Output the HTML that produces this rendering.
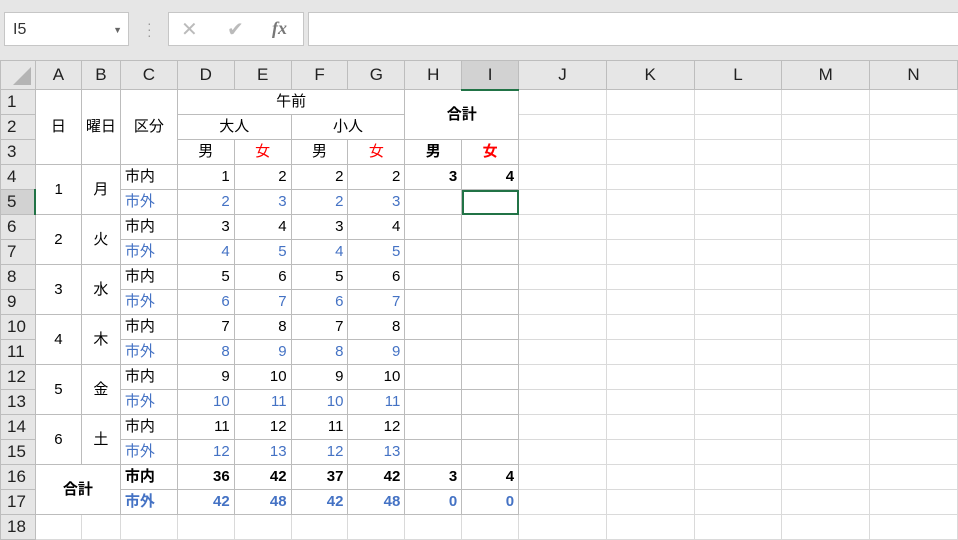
<!DOCTYPE html>
<html><head><meta charset="utf-8"><style>
body{margin:0;width:958px;height:538px;overflow:hidden;background:#fff;font-family:"Liberation Sans","Noto Sans CJK JP",sans-serif;position:relative}
.top{position:absolute;left:0;top:0;width:958px;height:60px;background:#e6e6e6}
.nb{position:absolute;left:4px;top:12px;width:125px;height:34px;background:#fff;border:1px solid #c6c6c6;font-size:16px;line-height:34px;padding-left:8px;box-sizing:border-box;color:#333}
.fx{position:absolute;left:168px;top:12px;width:136px;height:34px;background:#fff;border:1px solid #c6c6c6;box-sizing:border-box}
.in{position:absolute;left:308px;top:12px;width:652px;height:34px;background:#fff;border:1px solid #c6c6c6;box-sizing:border-box}
table{position:absolute;left:0;top:60px;border-collapse:collapse;table-layout:fixed}
tr{height:25px}
td{border:1px solid #dadada;padding:0 4px;font-size:15px;line-height:18px;white-space:nowrap;overflow:hidden}
tr.h{height:29px}
tr.h td{background:#e6e6e6;text-align:center;font-size:17px;color:#222;border-color:#bdbdbd}
td.rh{background:#e6e6e6;text-align:left;font-size:17px;color:#222;border-color:#bdbdbd;padding-left:6px}
.t{border-color:#bcbcbc}
.c{text-align:center}.r{text-align:right}
.b{color:#4472c4}.red{color:#f00}.bold{font-weight:bold}
.sel{outline:2px solid #217346;outline-offset:-2px}
</style></head><body>
<div class="top">
<div class="nb">I5<span style="position:absolute;right:6px;top:0;font-size:9px;color:#666">▼</span></div>
<div style="position:absolute;left:147px;top:20px;color:#999;font-size:14px;line-height:6px">·<br>·<br>·</div>
<div class="fx"><span style="position:absolute;left:12px;top:4px;font-size:20px;color:#bbb">✕</span><span style="position:absolute;left:58px;top:4px;font-size:20px;color:#bbb">✔</span><span style="position:absolute;left:103px;top:5px;font-size:18px;color:#777;font-style:italic;font-family:'Liberation Serif',serif;font-weight:bold">fx</span></div>
<div class="in"></div>
</div>
<table>
<colgroup><col style="width:35px"><col style="width:46px"><col style="width:37px"><col style="width:57px"><col style="width:57px"><col style="width:57px"><col style="width:57px"><col style="width:57px"><col style="width:57px"><col style="width:57px"><col style="width:88px"><col style="width:88px"><col style="width:88px"><col style="width:88px"><col style="width:88px"></colgroup>
<tr class="h"><td style="position:relative"><svg width="22" height="22" style="position:absolute;left:10px;top:4px"><polygon points="20,2 20,20 2,20" fill="#b4b4b4"/></svg></td><td>A</td><td>B</td><td>C</td><td>D</td><td>E</td><td>F</td><td>G</td><td>H</td><td style="background:#d2d2d2;border-bottom:2px solid #217346">I</td><td>J</td><td>K</td><td>L</td><td>M</td><td>N</td></tr>
<tr><td class="rh">1</td><td class="c t" rowspan="3">日</td><td class="c t" rowspan="3">曜日</td><td class="c t" rowspan="3">区分</td><td class="c t" colspan="4">午前</td><td class="c t bold" colspan="2" rowspan="2">合計</td><td></td><td></td><td></td><td></td><td></td></tr>
<tr><td class="rh">2</td><td class="c t" colspan="2">大人</td><td class="c t" colspan="2">小人</td><td></td><td></td><td></td><td></td><td></td></tr>
<tr><td class="rh">3</td><td class="c t">男</td><td class="c t red">女</td><td class="c t">男</td><td class="c t red">女</td><td class="c t bold">男</td><td class="c t bold red">女</td><td></td><td></td><td></td><td></td><td></td></tr>
<tr><td class="rh">4</td><td class="c t" rowspan="2">1</td><td class="c t" rowspan="2">月</td><td class="t">市内</td><td class="r t">1</td><td class="r t">2</td><td class="r t">2</td><td class="r t">2</td><td class="r t bold">3</td><td class="r t bold">4</td><td></td><td></td><td></td><td></td><td></td></tr>
<tr><td class="rh" style="background:#d2d2d2;border-right:2px solid #217346">5</td><td class="t b">市外</td><td class="r t b">2</td><td class="r t b">3</td><td class="r t b">2</td><td class="r t b">3</td><td class="t"></td><td class="t sel"></td><td></td><td></td><td></td><td></td><td></td></tr>
<tr><td class="rh">6</td><td class="c t" rowspan="2">2</td><td class="c t" rowspan="2">火</td><td class="t">市内</td><td class="r t">3</td><td class="r t">4</td><td class="r t">3</td><td class="r t">4</td><td class="t"></td><td class="t"></td><td></td><td></td><td></td><td></td><td></td></tr>
<tr><td class="rh">7</td><td class="t b">市外</td><td class="r t b">4</td><td class="r t b">5</td><td class="r t b">4</td><td class="r t b">5</td><td class="t"></td><td class="t"></td><td></td><td></td><td></td><td></td><td></td></tr>
<tr><td class="rh">8</td><td class="c t" rowspan="2">3</td><td class="c t" rowspan="2">水</td><td class="t">市内</td><td class="r t">5</td><td class="r t">6</td><td class="r t">5</td><td class="r t">6</td><td class="t"></td><td class="t"></td><td></td><td></td><td></td><td></td><td></td></tr>
<tr><td class="rh">9</td><td class="t b">市外</td><td class="r t b">6</td><td class="r t b">7</td><td class="r t b">6</td><td class="r t b">7</td><td class="t"></td><td class="t"></td><td></td><td></td><td></td><td></td><td></td></tr>
<tr><td class="rh">10</td><td class="c t" rowspan="2">4</td><td class="c t" rowspan="2">木</td><td class="t">市内</td><td class="r t">7</td><td class="r t">8</td><td class="r t">7</td><td class="r t">8</td><td class="t"></td><td class="t"></td><td></td><td></td><td></td><td></td><td></td></tr>
<tr><td class="rh">11</td><td class="t b">市外</td><td class="r t b">8</td><td class="r t b">9</td><td class="r t b">8</td><td class="r t b">9</td><td class="t"></td><td class="t"></td><td></td><td></td><td></td><td></td><td></td></tr>
<tr><td class="rh">12</td><td class="c t" rowspan="2">5</td><td class="c t" rowspan="2">金</td><td class="t">市内</td><td class="r t">9</td><td class="r t">10</td><td class="r t">9</td><td class="r t">10</td><td class="t"></td><td class="t"></td><td></td><td></td><td></td><td></td><td></td></tr>
<tr><td class="rh">13</td><td class="t b">市外</td><td class="r t b">10</td><td class="r t b">11</td><td class="r t b">10</td><td class="r t b">11</td><td class="t"></td><td class="t"></td><td></td><td></td><td></td><td></td><td></td></tr>
<tr><td class="rh">14</td><td class="c t" rowspan="2">6</td><td class="c t" rowspan="2">土</td><td class="t">市内</td><td class="r t">11</td><td class="r t">12</td><td class="r t">11</td><td class="r t">12</td><td class="t"></td><td class="t"></td><td></td><td></td><td></td><td></td><td></td></tr>
<tr><td class="rh">15</td><td class="t b">市外</td><td class="r t b">12</td><td class="r t b">13</td><td class="r t b">12</td><td class="r t b">13</td><td class="t"></td><td class="t"></td><td></td><td></td><td></td><td></td><td></td></tr>
<tr><td class="rh">16</td><td class="c t bold" colspan="2" rowspan="2">合計</td><td class="t bold">市内</td><td class="r t bold">36</td><td class="r t bold">42</td><td class="r t bold">37</td><td class="r t bold">42</td><td class="r t bold">3</td><td class="r t bold">4</td><td></td><td></td><td></td><td></td><td></td></tr>
<tr><td class="rh">17</td><td class="t b bold">市外</td><td class="r t b bold">42</td><td class="r t b bold">48</td><td class="r t b bold">42</td><td class="r t b bold">48</td><td class="r t b bold">0</td><td class="r t b bold">0</td><td></td><td></td><td></td><td></td><td></td></tr>
<tr><td class="rh">18</td><td></td><td></td><td></td><td></td><td></td><td></td><td></td><td></td><td></td><td></td><td></td><td></td><td></td><td></td></tr>
</table>
</body></html>
